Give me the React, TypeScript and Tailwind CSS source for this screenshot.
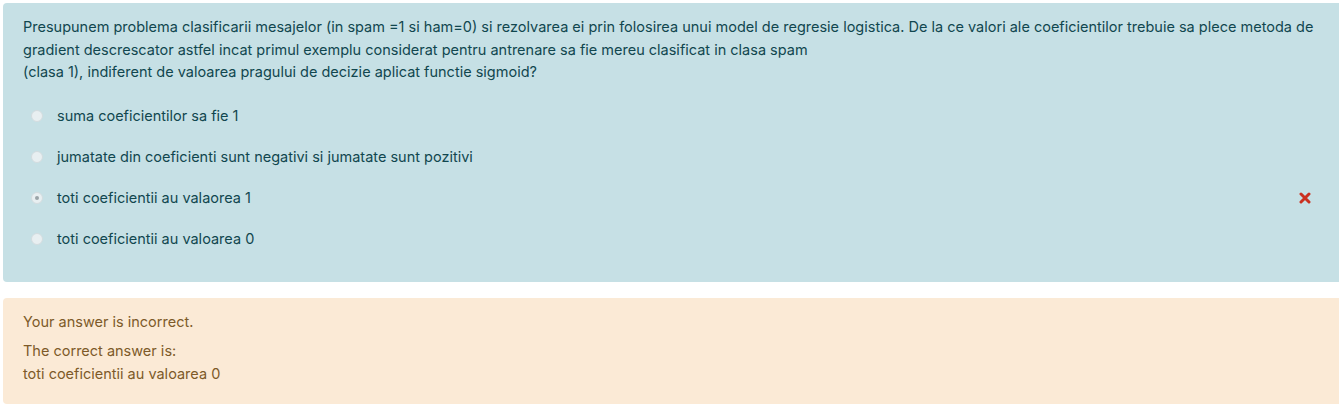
import { useState } from 'react'

const options = [
  'suma coeficientilor sa fie 1',
  'jumatate din coeficienti sunt negativi si jumatate sunt pozitivi',
  'toti coeficientii au valaorea 1',
  'toti coeficientii au valoarea 0',
]

function Radio({ checked }: { checked: boolean }) {
  return (
    <span className="flex h-[12px] w-[12px] items-center justify-center rounded-full border border-[#d3dcdf] bg-[#e8eff1]">
      {checked && <span className="h-[4px] w-[4px] rounded-full bg-[#9aa4a8]" />}
    </span>
  )
}

function WrongMark() {
  return (
    <svg width="12" height="12" viewBox="0 0 12 12" className="text-[#ca3120]">
      <path d="M2 2 L10 10 M10 2 L2 10" stroke="currentColor" strokeWidth="3" strokeLinecap="round" />
    </svg>
  )
}

export default function App() {
  const [selected] = useState(2)

  return (
    <div className="w-[1339px] bg-white pt-[3px] pl-[3px] pb-[3px] text-[14.5px] leading-[22.5px]" style={{ fontFamily: 'Inter, "Noto Sans", sans-serif' }}>
      <div className="rounded-l-[4px] bg-[#c6e0e5] pt-[13px] pb-[22px] pl-[20px] pr-[20px] text-[#11474f]">
        <p>
          Presupunem problema clasificarii mesajelor (in spam =1 si ham=0) si rezolvarea ei prin folosirea unui model de regresie logistica. De la ce valori ale coeficientilor trebuie sa plece metoda de gradient descrescator astfel incat primul exemplu considerat pentru antrenare sa fie mereu clasificat in clasa spam
          <br />
          (clasa 1), indiferent de valoarea pragului de decizie aplicat functie sigmoid?
        </p>
        <div className="mt-[12px] flex flex-col">
          {options.map((o, i) => (
            <div key={o} className="flex h-[41px] items-center">
              <div className="ml-[8px] mr-[14px]">
                <Radio checked={i === selected} />
              </div>
              <span className="flex-1">{o}</span>
              {i === selected && (
                <span className="mr-[8px]">
                  <WrongMark />
                </span>
              )}
            </div>
          ))}
        </div>
      </div>

      <div className="mt-[16px] rounded-l-[4px] bg-[#fbead6] pt-[13px] pb-[19px] pl-[20px] text-[#7d5a29]">
        <p>Your answer is incorrect.</p>
        <p className="mt-[7px]">
          The correct answer is:
          <br />
          toti coeficientii au valoarea 0
        </p>
      </div>
    </div>
  )
}
